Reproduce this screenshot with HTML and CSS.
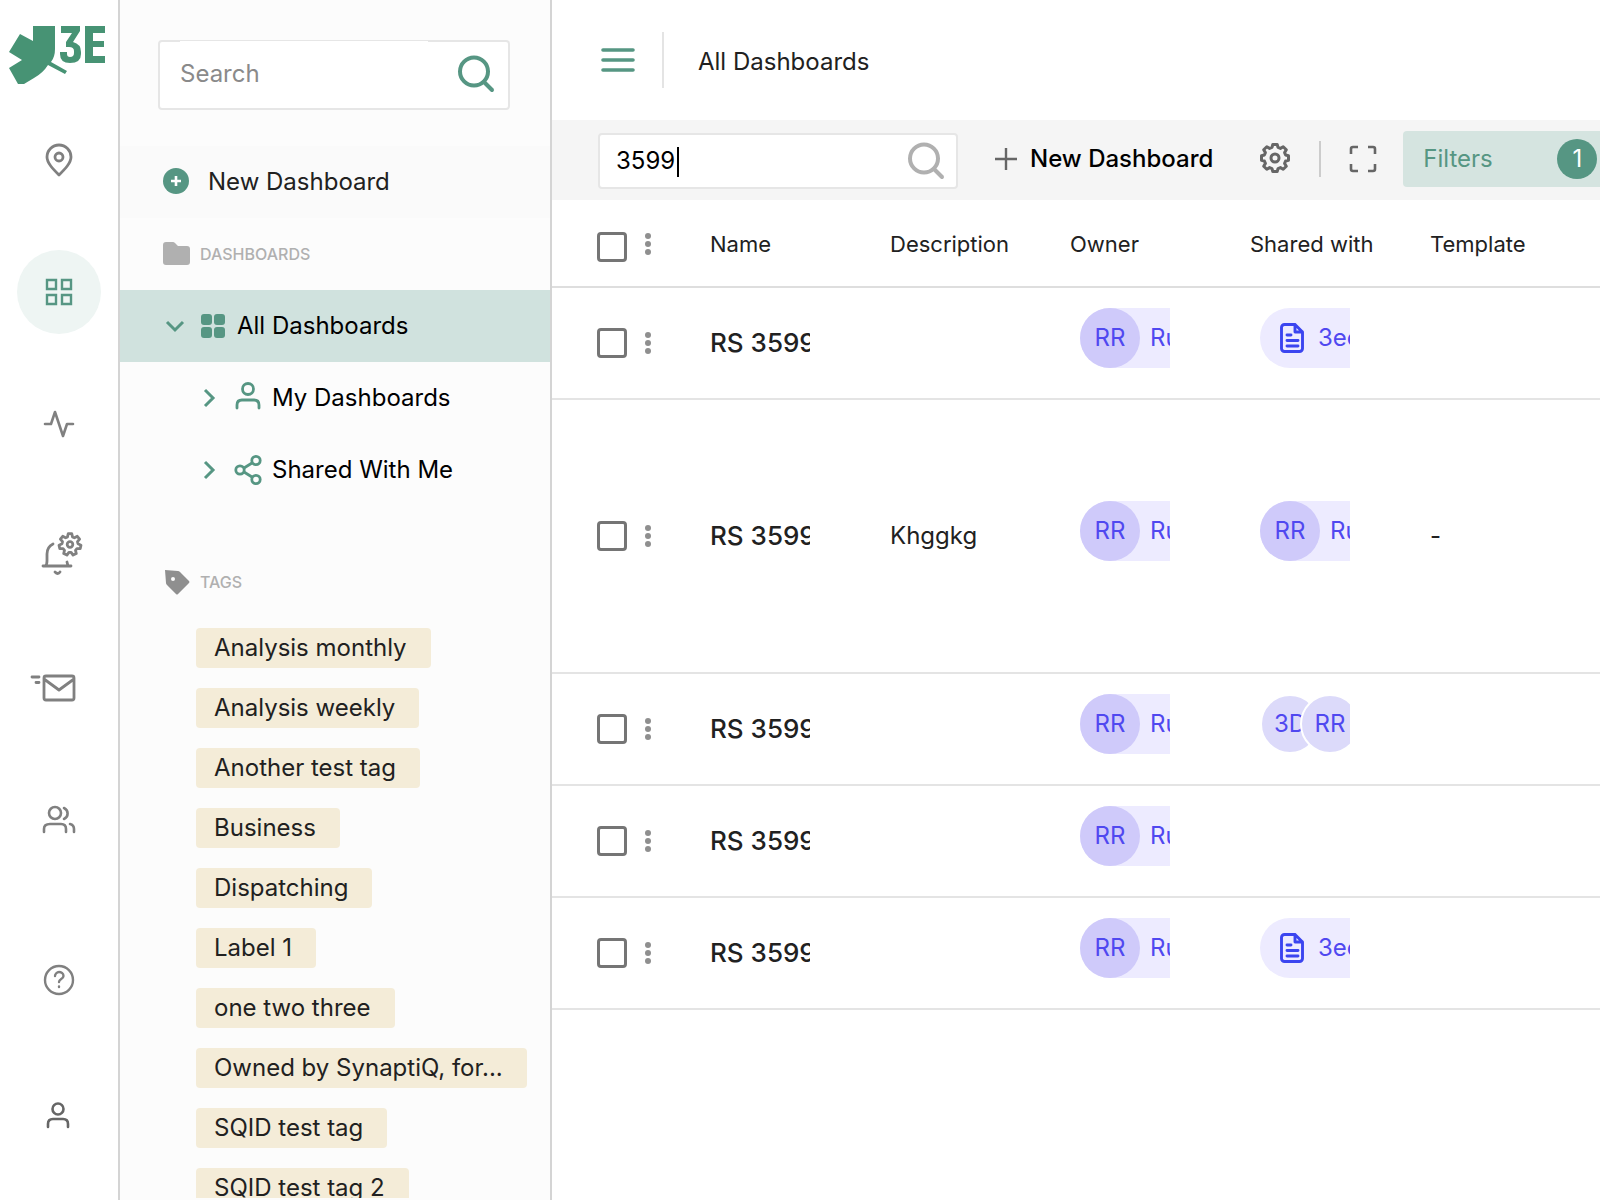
FILE: index.html
```html
<!DOCTYPE html>
<html lang="en">
<head>
<meta charset="utf-8">
<title>All Dashboards</title>
<link rel="stylesheet" href="styles.css">
</head>
<body>
<svg class="defs" aria-hidden="true">
  <symbol id="i-search" viewBox="0 0 40 40"><g fill="none" stroke="currentColor" stroke-width="4" stroke-linecap="round"><circle cx="18" cy="17.500" r="14"/><path d="M28 28l8 8"/></g></symbol>
  <symbol id="i-dots" viewBox="0 0 8 24"><g fill="currentColor"><circle cx="4" cy="4" r="3"/><circle cx="4" cy="12" r="3"/><circle cx="4" cy="20" r="3"/></g></symbol>
  <symbol id="i-right" viewBox="0 0 20 20"><path d="M5 2l8 8-8 8" fill="none" stroke="currentColor" stroke-width="3"/></symbol>
  <symbol id="i-doc" viewBox="0 0 32 32"><path d="M19 2.500H8.500a3 3 0 0 0-3 3v21a3 3 0 0 0 3 3h15a3 3 0 0 0 3-3V10zM19 2.500V10h7.500M11 13h4M11 18.500h11M11 24h11" fill="none" stroke="currentColor" stroke-width="2.900" stroke-linecap="round" stroke-linejoin="round"/></symbol>
</svg>
<div class="app">
  <nav class="rail" aria-label="Main">
    <a class="logo" href="#" aria-label="3E">
      <svg width="100" height="60" viewBox="9 26 100 60"><path fill="#479374" d="M33 26H55V49Q55 57 51 62L67 71L65 74L48 65Q43 73 34 78L24 84H18L9 68L22 60L9 52L20 34L33 41Z"/><path fill="#479374" d="M61 26H80V31L73 42Q81 44 81 52V54Q81 63 70 63Q60 63 60 54V52H67V54Q67 57 70 57Q74 57 74 53V51Q74 47 69 47H66V42L72 33H61ZM85 26H105V33H93V41H104V47H93V56H105V63H85Z"/></svg>
    </a>
    <a class="rail-item" href="#" aria-label="Sites"><svg width="32" height="36" viewBox="0 0 32 36"><g fill="none" stroke="currentColor" stroke-width="2.800" stroke-linejoin="round"><path d="M16 33C10 27 4 21 4 15a12 12 0 0 1 24 0c0 6-6 12-12 18z"/><circle cx="16" cy="15" r="4"/></g></svg></a>
    <a class="rail-item active" href="#" aria-label="Dashboards"><svg width="28" height="28" viewBox="0 0 28 28"><path d="M2 2h9v9H2zM17 2h9v9h-9zM2 17h9v9H2zM17 17h9v9h-9z" fill="none" stroke="currentColor" stroke-width="2.400"/></svg></a>
    <a class="rail-item" href="#" aria-label="Activity"><svg width="32" height="32" viewBox="0 0 32 32"><path d="M2 16h6l4-12 8 24 4-12h6" fill="none" stroke="currentColor" stroke-width="2.600" stroke-linecap="round" stroke-linejoin="round"/></svg></a>
    <a class="rail-item" href="#" aria-label="Alert settings"><svg width="48" height="52" viewBox="35 530 48 52"><g fill="none" stroke="currentColor" stroke-width="2.800" stroke-linecap="round" stroke-linejoin="round"><path d="M53 544q-6 3-6 10v7q0 4-2 5M43 566h28M67 562l1 4M55 572q3 3 5 0"/><g transform="translate(70 544.500)"><path d="M-1.800-10.800L1.800-10.800L2.500-7.600L4.400-6.700L7.300-8.200L9.600-5.300L7.500-2.800L8-.7L11 .7L10.200 4.200L6.900 4.100L5.500 5.800L6.300 9L3.100 10.600L1.100 7.900L-1.100 7.900L-3.100 10.600L-6.300 9L-5.500 5.800L-6.900 4.100L-10.200 4.200L-11 .7L-8-.7L-7.500-2.800L-9.600-5.300L-7.300-8.200L-4.400-6.700L-2.500-7.600Z"/><circle r="2.800"/></g></g></svg></a>
    <a class="rail-item" href="#" aria-label="Messages"><svg width="60" height="32" viewBox="28 672 60 32"><path d="M45 676h26a2 2 0 0 1 2 2v20a2 2 0 0 1-2 2H45a2 2 0 0 1-2-2v-20a2 2 0 0 1 2-2zM43 679l15 11 15-11M31 677h7M35 682.500h3" fill="none" stroke="currentColor" stroke-width="2.800" stroke-linecap="round" stroke-linejoin="round"/></svg></a>
    <a class="rail-item" href="#" aria-label="Users"><svg width="36" height="32" viewBox="41 804 36 32"><g fill="none" stroke="currentColor" stroke-width="2.600" stroke-linecap="round"><circle cx="55" cy="813" r="6"/><path d="M44 832v-3q0-5 6-5h11q5 0 5 5v3M64 808a6 6 0 0 1 0 11M70 824q4 1 4 5v3"/></g></svg></a>
    <div class="rail-bottom">
      <a class="rail-item" href="#" aria-label="Help"><svg width="32" height="32" viewBox="0 0 32 32"><g fill="none" stroke="currentColor" stroke-width="2.400" stroke-linecap="round"><circle cx="16" cy="16" r="14"/><path d="M12 12c0-2 2-4 4-4s4.500 1.500 4.500 4c0 3-4.500 3-4.500 6M16 22.500v.5"/></g></svg></a>
      <a class="rail-item profile" href="#" aria-label="Profile"><svg width="28" height="28" viewBox="1 1 28 28"><g fill="none" stroke="currentColor" stroke-width="2.600" stroke-linecap="round"><circle cx="14" cy="8" r="5.500"/><path d="M4 26v-3q0-5 5-5h10q5 0 5 5v3"/></g></svg></a>
    </div>
  </nav>

  <aside class="sidebar">
    <label class="field side-search"><input type="search" placeholder="Search" aria-label="Search dashboards"><svg class="icon-search" width="40" height="40"><use href="#i-search"/></svg></label>
    <button class="side-new" type="button"><svg width="28" height="28" viewBox="0 0 28 28"><circle cx="14" cy="13" r="13" fill="#569683"/><path d="M14 8v10M9 13h10" stroke="#fff" stroke-width="2.600"/></svg>New Dashboard</button>
    <h2 class="section"><svg width="28" height="28" viewBox="0 0 28 28"><path fill="#b0b0b0" d="M4 2h7q1 0 2 1l3 3h9a3 3 0 0 1 3 3v13a3 3 0 0 1-3 3H4a3 3 0 0 1-3-3V5a3 3 0 0 1 3-3z"/></svg>DASHBOARDS</h2>
    <a class="tree selected" href="#"><svg width="20" height="20" viewBox="0 0 20 20"><path d="M2 6l8 8 8-8" fill="none" stroke="currentColor" stroke-width="3"/></svg><svg width="24" height="24" viewBox="0 0 24 24"><g fill="currentColor"><rect width="11" height="11" rx="3"/><rect x="13" width="11" height="11" rx="3"/><rect y="13" width="11" height="11" rx="3"/><rect x="13" y="13" width="11" height="11" rx="3"/></g></svg><span>All Dashboards</span></a>
    <a class="tree child" href="#"><svg width="20" height="20"><use href="#i-right"/></svg><svg width="28" height="32" viewBox="0 0 28 32"><g fill="none" stroke="currentColor" stroke-width="2.800" stroke-linecap="round"><circle cx="14" cy="7" r="5.500"/><path d="M3 26v-3q0-5 5-5h12q5 0 5 5v3"/></g></svg><span>My Dashboards</span></a>
    <a class="tree child" href="#"><svg width="20" height="20"><use href="#i-right"/></svg><svg width="28" height="32" viewBox="0 0 28 32"><g fill="none" stroke="currentColor" stroke-width="2.800"><circle cx="22" cy="6.500" r="4.200"/><circle cx="6" cy="16" r="4.200"/><circle cx="22" cy="25.500" r="4.200"/><path d="M10 14l8-5M10 18l8 5"/></g></svg><span>Shared With Me</span></a>
    <h2 class="section tags-title"><svg width="28" height="28" viewBox="0 0 28 28"><path fill="#8f8f8f" fill-rule="evenodd" d="M3 2l13 1q1 0 2 1l9 9q1 1 0 2L16 26q-1 1-2 0l-9-9q-1-1-1-2zM11 9a2 2 0 1 0 0 4a2 2 0 0 0 0-4z"/></svg>TAGS</h2>
    <ul class="tags">
      <li>Analysis monthly</li><li>Analysis weekly</li><li>Another test tag</li><li>Business</li><li>Dispatching</li><li>Label 1</li><li>one two three</li><li>Owned by SynaptiQ, for...</li><li>SQID test tag</li><li>SQID test tag 2</li>
    </ul>
  </aside>

  <main class="main">
    <header class="header">
      <button class="icon-btn" type="button" aria-label="Toggle menu"><svg width="34" height="28" viewBox="0 0 34 28"><path d="M2 4h30M2 14h30M2 24h30" stroke="#569683" stroke-width="3.600" stroke-linecap="round"/></svg></button>
      <span class="header-rule"></span>
      <h1>All Dashboards</h1>
    </header>
    <div class="toolbar">
      <label class="field main-search"><input type="text" value="3599" aria-label="Filter dashboards"><span class="caret"></span><svg class="icon-search" width="40" height="40"><use href="#i-search"/></svg></label>
      <button class="new-btn" type="button"><svg width="24" height="24" viewBox="0 0 24 24"><path d="M12 1v22M1 12h22" stroke="#666" stroke-width="2.400"/></svg>New Dashboard</button>
      <button class="icon-btn gear" type="button" aria-label="Settings"><svg width="32" height="32" viewBox="-16 -15 32 32"><g fill="none" stroke="#666" stroke-width="3" stroke-linejoin="round"><path d="M-2.200-13.500L2.200-13.500L3-10.600L5.400-9.600L8.200-11.300L11.300-8.200L9.600-5.400L10.600-3L13.500-2.200L13.500 2.200L10.600 3L9.600 5.400L11.300 8.200L8.200 11.300L5.400 9.600L3 10.600L2.200 13.500L-2.200 13.500L-3 10.600L-5.400 9.600L-8.200 11.300L-11.300 8.200L-9.600 5.400L-10.600 3L-13.500 2.200L-13.500-2.200L-10.600-3L-9.600-5.400L-11.300-8.200L-8.200-11.300L-5.400-9.600L-3-10.600Z"/><circle r="4"/></g></svg></button>
      <span class="tool-rule"></span>
      <button class="icon-btn full" type="button" aria-label="Full screen"><svg width="28" height="28" viewBox="0 0 28 28"><path d="M2 9V4a2 2 0 0 1 2-2h5M19 2h5a2 2 0 0 1 2 2v5M26 19v5a2 2 0 0 1-2 2h-5M9 26H4a2 2 0 0 1-2-2v-5" fill="none" stroke="#666" stroke-width="2.600"/></svg></button>
      <button class="filters" type="button">Filters<span class="badge">1</span></button>
    </div>
    <table class="grid">
      <colgroup><col class="c-select"><col class="c-data"><col class="c-data"><col class="c-data"><col class="c-data"><col></colgroup>
      <thead><tr>
        <th><div class="select"><input type="checkbox" aria-label="Select all"><button class="icon-btn" type="button" aria-label="Column menu"><svg width="8" height="24"><use href="#i-dots"/></svg></button></div></th>
        <th>Name</th><th>Description</th><th>Owner</th><th>Shared with</th><th>Template</th>
      </tr></thead>
      <tbody>
        <tr>
          <td><div class="select"><input type="checkbox" aria-label="Select row 1"><button class="icon-btn" type="button" aria-label="Row menu"><svg width="8" height="24"><use href="#i-dots"/></svg></button></div></td>
          <td><div class="clip name">RS 3599</div></td><td></td>
          <td><div class="clip people"><span class="chip"><span class="avatar">RR</span>Ru</span></div></td>
          <td><div class="clip people"><span class="chip doc"><svg width="32" height="32"><use href="#i-doc"/></svg>3ee</span></div></td><td></td>
        </tr>
        <tr class="tall">
          <td><div class="select"><input type="checkbox" aria-label="Select row 2"><button class="icon-btn" type="button" aria-label="Row menu"><svg width="8" height="24"><use href="#i-dots"/></svg></button></div></td>
          <td><div class="clip name">RS 3599</div></td><td><div class="clip">Khggkg</div></td>
          <td><div class="clip people"><span class="chip"><span class="avatar">RR</span>Ru</span></div></td>
          <td><div class="clip people"><span class="chip"><span class="avatar">RR</span>Ru</span></div></td><td>-</td>
        </tr>
        <tr>
          <td><div class="select"><input type="checkbox" aria-label="Select row 3"><button class="icon-btn" type="button" aria-label="Row menu"><svg width="8" height="24"><use href="#i-dots"/></svg></button></div></td>
          <td><div class="clip name">RS 3599</div></td><td></td>
          <td><div class="clip people"><span class="chip"><span class="avatar">RR</span>Ru</span></div></td>
          <td><div class="clip people"><span class="stacked">3D</span><span class="stacked">RR</span></div></td><td></td>
        </tr>
        <tr>
          <td><div class="select"><input type="checkbox" aria-label="Select row 4"><button class="icon-btn" type="button" aria-label="Row menu"><svg width="8" height="24"><use href="#i-dots"/></svg></button></div></td>
          <td><div class="clip name">RS 3599</div></td><td></td>
          <td><div class="clip people"><span class="chip"><span class="avatar">RR</span>Ru</span></div></td>
          <td></td><td></td>
        </tr>
        <tr>
          <td><div class="select"><input type="checkbox" aria-label="Select row 5"><button class="icon-btn" type="button" aria-label="Row menu"><svg width="8" height="24"><use href="#i-dots"/></svg></button></div></td>
          <td><div class="clip name">RS 3599</div></td><td></td>
          <td><div class="clip people"><span class="chip"><span class="avatar">RR</span>Ru</span></div></td>
          <td><div class="clip people"><span class="chip doc"><svg width="32" height="32"><use href="#i-doc"/></svg>3ee</span></div></td><td></td>
        </tr>
      </tbody>
    </table>
  </main>
</div>
</body>
</html>
```
FILE: styles.css
```css
* { box-sizing: border-box; }
body {
  margin: 0;
  background: #fff;
  color: #212121;
  font: 400 24px/32px Inter, "Liberation Sans", sans-serif;
}
button, input { font: inherit; color: inherit; }
button { border: 0; padding: 0; background: none; cursor: pointer; }
a { color: inherit; text-decoration: none; }
svg { display: block; flex: none; }
.defs { position: absolute; width: 0; height: 0; }

.app { display: flex; height: 100vh; overflow: hidden; }

.rail {
  flex: none;
  width: 120px;
  border-right: 2px solid #d4d4d4;
  display: flex;
  flex-direction: column;
  align-items: center;
  gap: 48px;
  padding: 26px 0 42px;
  color: #808080;
}
.logo { margin-bottom: -16px; }
.rail-item {
  width: 84px;
  height: 84px;
  flex: none;
  border-radius: 50%;
  display: flex;
  align-items: center;
  justify-content: center;
}
.rail-item.active { background: #eef5f3; color: #569683; }
.rail-bottom { margin-top: auto; display: flex; flex-direction: column; gap: 52px; }
.profile { color: #666; }

.sidebar {
  flex: none;
  width: 432px;
  display: flex;
  flex-direction: column;
  padding-bottom: 2px;
  border-right: 2px solid #d4d4d4;
  background: #fcfcfc;
}
.sidebar > * { flex: none; }
.field {
  position: relative;
  display: flex;
  align-items: center;
  background: #fff;
  border: 2px solid #e6e6e6;
  border-radius: 4px;
}
.field input {
  flex: 1;
  min-width: 0;
  border: 0;
  outline: 0;
  padding: 0;
  background: none;
  appearance: none;
}
.field input::placeholder { color: #8a8a8a; opacity: 1; }
.side-search { margin: 40px 40px 36px 38px; height: 70px; padding: 0 12px 2px 20px; }
/* notch in the outline, above the text */
.side-search::before {
  content: "";
  position: absolute;
  top: -1px;
  left: 20px;
  right: 80px;
  height: 1px;
  background: #fff;
}
.side-search .icon-search { color: #569683; }
.side-new {
  width: 100%;
  height: 72px;
  background: #fafafa;
  display: flex;
  align-items: center;
  gap: 18px;
  padding-left: 42px;
}
.section {
  margin: 0;
  height: 72px;
  display: flex;
  align-items: center;
  gap: 10px;
  padding-left: 42px;
  font-size: 16px;
  font-weight: 500;
  color: #b0b0b0;
}
.tree { display: flex; align-items: center; height: 72px; color: #569683; }
.tree span { color: #000; }
.tree.selected { background: #d0e2de; gap: 16px; padding-left: 45px; }
.tree.selected span { margin-left: -4px; }
.tree.child { padding-left: 80px; gap: 14px; }
.tree.child span { margin-left: -4px; }
.sidebar .tags-title { margin-top: 40px; }
.sidebar .tags {
  flex: 1;
  min-height: 0;
  overflow: hidden;
  list-style: none;
  margin: 10px 0 0;
  padding: 0 18px 0 76px;
  display: flex;
  flex-direction: column;
  align-items: flex-start;
  gap: 20px;
}
.tags li {
  flex: none;
  height: 40px;
  line-height: 40px;
  padding: 0 24px 0 18px;
  background: #f4ecd8;
  border-radius: 4px;
  white-space: nowrap;
}

.main { flex: 1; min-width: 0; overflow: hidden; }
.header { height: 120px; display: flex; align-items: center; padding-left: 49px; }
.header-rule { width: 2px; height: 56px; margin: 0 34px 0 27px; background: #e4e4e4; }
.header h1 { margin: 4px 0 0; font-size: 24px; font-weight: 400; }

.toolbar {
  height: 80px;
  display: flex;
  align-items: center;
  padding: 0 0 2px 46px;
  background: #f5f5f5;
}
.toolbar > * { flex: none; }
.main-search { width: 360px; height: 56px; margin-top: 4px; padding: 0 10px 0 16px; color: #000; }
.main-search .icon-search { color: #b0b0b0; }
.caret { position: absolute; left: 77px; top: 12px; width: 2px; height: 30px; background: #000; }
.new-btn {
  display: flex;
  align-items: center;
  gap: 12px;
  margin-left: 36px;
  font-weight: 500;
  color: #000;
}
.gear { margin-left: 46px; }
.tool-rule { width: 2px; height: 36px; margin: 0 28px; background: #ccc; }
.filters {
  display: flex;
  align-items: center;
  justify-content: space-between;
  width: 220px;
  height: 56px;
  margin-left: 26px;
  padding: 0 26px 0 20px;
  border-radius: 4px;
  background: #d5e4e0;
  color: #569683;
}
.badge { width: 40px; line-height: 40px; border-radius: 50%; background: #569683; color: #fff; text-align: center; }

.grid { width: 100%; table-layout: fixed; border-collapse: separate; border-spacing: 0; }
.c-select { width: 118px; }
.c-data { width: 180px; }
.grid th, .grid td { padding: 0 40px; text-align: left; vertical-align: middle; white-space: nowrap; }
.grid th { height: 88px; padding-top: 2px; border-bottom: 2px solid #dedede; font-size: 22px; font-weight: 400; }
.grid td { height: 112px; border-bottom: 2px solid #e4e4e4; }
.grid .tall td { height: 274px; }
.grid th:first-child, .grid td:first-child { padding: 0 0 0 45px; }
.select { display: flex; align-items: center; gap: 17px; color: #8f8f8f; }
.select input {
  appearance: none;
  width: 30px;
  height: 30px;
  margin: 0;
  border: 3px solid #757575;
  border-radius: 4px;
  background: #fff;
}
.grid th .select { align-items: flex-start; padding-top: 8px; }
.clip { overflow: hidden; }
.name { font-size: 26px; font-weight: 500; }
.people { display: flex; height: 70px; padding-left: 10px; color: #5048f0; }
.chip {
  flex: none;
  display: flex;
  align-items: center;
  gap: 10px;
  height: 60px;
  padding-right: 20px;
  border-radius: 30px;
  background: #edebff;
}
.avatar { width: 60px; line-height: 60px; border-radius: 50%; background: #cfcafa; text-align: center; }
.doc { padding-left: 16px; }
.doc svg { color: #3b45f0; }
.stacked {
  flex: none;
  width: 60px;
  height: 60px;
  line-height: 56px;
  border: 2px solid #fff;
  border-radius: 50%;
  background: #dcdafa;
  text-align: center;
}
.stacked + .stacked { margin-left: -20px; }
```
